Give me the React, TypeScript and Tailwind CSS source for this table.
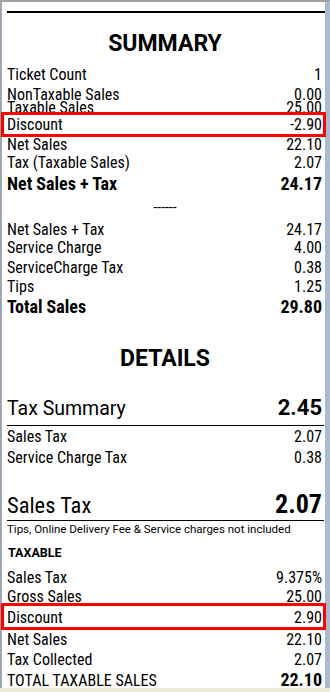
import React from "react";

const cond = "font-['Roboto_Condensed','Liberation_Sans_Narrow',Roboto,sans-serif]";
const rob = "font-['Roboto',sans-serif]";

function Row({
  label,
  value,
  h,
  bold = false,
  clip = false,
}: {
  label: string;
  value: string;
  h: string;
  bold?: boolean;
  clip?: boolean;
}) {
  return (
    <div
      className={`flex justify-between items-baseline pl-[5px] pr-[3px] text-black ${cond} ${h} ${
        clip ? "overflow-hidden" : "overflow-visible"
      } ${bold ? "text-[18px] font-bold leading-[22px]" : "text-[16px] leading-[19px]"}`}
    >
      <span>{label}</span>
      <span>{value}</span>
    </div>
  );
}

export default function App() {
  return (
    <div className="w-[330px] h-[692px] bg-[#ece9d8] flex flex-col">
      <div className="h-[688px] border-t-2 border-t-[#a0a0a0] border-l border-l-[#a0a0a0] border-r border-r-[#b8b8b8] flex">
        <div className="flex-1 border-l border-l-[#9fb4d0] border-r-4 border-r-[#a7bbd6] bg-white flex flex-col">
          {/* SUMMARY */}
          <div className="h-[2px] bg-black ml-[5px] mt-[9px]" />
          <div className={`mt-[17px] h-[28px] leading-[28px] text-center pl-[3px] text-[23px] font-bold text-black ${rob}`}>
            SUMMARY
          </div>
          <div className="mt-[7px]" />
          <Row label="Ticket Count" value="1" h="h-[20px]" />
          <Row label="NonTaxable Sales" value="0.00" h="h-[13px]" />
          <Row label="Taxable Sales" value="25.00" h="h-[14px]" clip />
          <div className="relative -mx-px border-[3px] border-[#ff0000] bg-white">
            <div className={`flex justify-between pl-[3px] pr-[1px] h-[19px] leading-[19px] text-[16px] text-black ${cond}`}>
              <span>Discount</span>
              <span>-2.90</span>
            </div>
          </div>
          <div className="-mt-[2px]" />
          <Row label="Net Sales" value="22.10" h="h-[18px]" />
          <Row label="Tax (Taxable Sales)" value="2.07" h="h-[20px]" />
          <Row label="Net Sales + Tax" value="24.17" h="h-[25px]" bold />
          <div className={`h-[22px] leading-[18px] text-[14px] text-center pl-[3px] text-black ${rob}`}>------</div>
          <Row label="Net Sales + Tax" value="24.17" h="h-[18px]" />
          <Row label="Service Charge" value="4.00" h="h-[20px]" />
          <Row label="ServiceCharge Tax" value="0.38" h="h-[19px]" />
          <Row label="Tips" value="1.25" h="h-[19px]" />
          <Row label="Total Sales" value="29.80" h="h-[22px]" bold />

          {/* DETAILS */}
          <div className={`mt-[27px] h-[28px] leading-[28px] text-center pl-[3px] text-[23px] font-bold text-black ${rob}`}>
            DETAILS
          </div>
          <div className={`mt-[21px] h-[28px] leading-[28px] flex justify-between items-baseline pl-[5px] pr-[3px] text-black ${rob}`}>
            <span className="text-[19.5px]">Tax Summary</span>
            <span className="text-[22px] font-bold">2.45</span>
          </div>
          <div className="mt-[3px] h-px bg-black ml-[5px] mr-[1px]" />
          <div className="mt-px" />
          <Row label="Sales Tax" value="2.07" h="h-[21px]" />
          <Row label="Service Charge Tax" value="0.38" h="h-[19px]" />
          <div className={`mt-[22px] h-[30px] leading-[30px] flex justify-between items-baseline pl-[5px] pr-[3px] text-black ${cond}`}>
            <span className="text-[22.5px]">Sales Tax</span>
            <span className="text-[26px] font-bold">2.07</span>
          </div>
          <div className="mt-px h-px bg-black ml-[5px] mr-[1px]" />
          <div className={`mt-[2px] h-[13px] leading-[13px] pl-[5px] text-[11.5px] text-black whitespace-nowrap ${rob}`}>
            Tips, Online Delivery Fee &amp; Service charges not included
          </div>
          <div className={`mt-[9px] h-[16px] leading-[16px] pl-[6px] text-[12.5px] font-bold text-black ${rob}`}>
            TAXABLE
          </div>
          <div className="mt-[7px]" />
          <Row label="Sales Tax" value="9.375%" h="h-[19px]" />
          <Row label="Gross Sales" value="25.00" h="h-[16px]" />
          <div className="relative -mx-px border-[3px] border-[#ff0000] bg-white">
            <div className={`flex justify-between pl-[3px] pr-[1px] h-[21px] leading-[23px] text-[16px] text-black ${cond}`}>
              <span>Discount</span>
              <span>2.90</span>
            </div>
          </div>
          <Row label="Net Sales" value="22.10" h="h-[20px]" />
          <Row label="Tax Collected" value="2.07" h="h-[20px]" />
          <div className={`flex justify-between items-baseline pl-[5px] pr-[3px] h-[18px] leading-[19px] text-black ${cond}`}>
            <span className="text-[16px]">TOTAL TAXABLE SALES</span>
            <span className="text-[18px] font-bold">22.10</span>
          </div>
        </div>
      </div>
    </div>
  );
}
